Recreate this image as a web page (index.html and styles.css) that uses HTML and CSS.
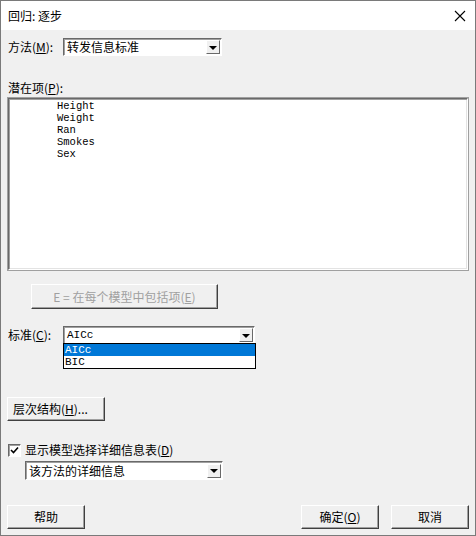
FILE: index.html
```html
<!DOCTYPE html>
<html lang="zh-CN">
<head>
    <meta charset="UTF-8">
    <title>回归: 逐步</title>
    <link rel="stylesheet" href="styles.css">
</head>
<body>
    <div class="window">
        <div class="titleBar">
            <span class="title">回归: 逐步</span>
            <svg class="closeIcon" width="12" height="12" viewBox="0 0 12 12">
                <path d="M1 1 L11 11 M11 1 L1 11" stroke="#000" stroke-width="1.1" fill="none"/>
            </svg>
        </div>

        <div class="content">
            <div class="row methodRow">
                <label class="rowLabel">方法(<u>M</u>):</label>
                <div class="combo methodCombo">
                    <span class="comboText">转发信息标准</span>
                    <span class="arrowBtn"><span class="arrow"></span></span>
                </div>
            </div>

            <div class="listLabel">潜在项(<u>P</u>):</div>
            <div class="listBox">
                <div class="listItem">Height</div>
                <div class="listItem">Weight</div>
                <div class="listItem">Ran</div>
                <div class="listItem">Smokes</div>
                <div class="listItem">Sex</div>
            </div>

            <div class="button includeBtn disabled">E = 在每个模型中包括项(<u>E</u>)</div>

            <div class="row criteriaRow">
                <label class="rowLabel">标准(<u>C</u>):</label>
                <div class="combo criteriaCombo">
                    <span class="comboText mono">AICc</span>
                    <span class="arrowBtn"><span class="arrow"></span></span>
                    <div class="dropList">
                        <div class="dropItem selected">AICc</div>
                        <div class="dropItem">BIC</div>
                    </div>
                </div>
            </div>

            <div class="button hierBtn">层次结构(<u>H</u>)...</div>

            <div class="checkRow">
                <span class="checkBox">
                    <svg width="11" height="11" viewBox="0 0 11 11">
                        <path d="M2 5 L4.5 7.5 L9 2.5" stroke="#000" stroke-width="1.6" fill="none"/>
                    </svg>
                </span>
                <span class="checkLabel">显示模型选择详细信息表(<u>D</u>)</span>
            </div>
            <div class="combo detailCombo">
                <span class="comboText">该方法的详细信息</span>
                <span class="arrowBtn"><span class="arrow"></span></span>
            </div>

            <div class="footerButtons">
                <div class="button footBtn">帮助</div>
                <div class="spacer"></div>
                <div class="button footBtn">确定(<u>O</u>)</div>
                <div class="button footBtn">取消</div>
            </div>
        </div>
    </div>
</body>
</html>
```

FILE: styles.css
```css
body {
    margin: 0;
    font-family: "Noto Sans CJK SC", "Liberation Sans", sans-serif;
    font-size: 12px;
    color: #000;
    background-color: #f0f0f0;
}

.window {
    width: 476px;
    height: 536px;
    box-sizing: border-box;
    border: 1px solid #7a7a7a;
    background-color: #f0f0f0;
    display: flex;
    flex-direction: column;
}

.titleBar {
    height: 29px;
    background-color: #fff;
    display: flex;
    align-items: center;
    justify-content: space-between;
    padding: 0 9px 0 7px;
}

.title {
    font-size: 12px;
    line-height: 14px;
}

.content {
    flex: 1;
    padding: 8px 6px 6px 6px;
    display: flex;
    flex-direction: column;
}

u {
    text-decoration: underline;
    text-underline-offset: 1px;
}

.row {
    display: flex;
    align-items: center;
    height: 18px;
}

.rowLabel {
    width: 55px;
    padding-left: 1px;
    line-height: 14px;
}

/* sunken combo box */
.combo {
    position: relative;
    height: 18px;
    box-sizing: border-box;
    border: 1px solid;
    border-color: #696969 #fff #fff #696969;
    box-shadow: inset 1px 1px 0 #a0a0a0;
    background-color: #fff;
    display: flex;
    align-items: center;
}

.comboText {
    flex: 1;
    padding-left: 3px;
    line-height: 14px;
    white-space: nowrap;
}

.mono {
    font-family: "Liberation Mono", monospace;
    font-size: 11px;
}

.arrowBtn {
    width: 14px;
    height: 14px;
    margin-right: 1px;
    box-sizing: border-box;
    border: 1px solid;
    border-color: #fff #696969 #696969 #fff;
    background-color: #f0f0f0;
    display: flex;
    align-items: center;
    justify-content: center;
}

.arrow {
    width: 0;
    height: 0;
    border-left: 4px solid transparent;
    border-right: 4px solid transparent;
    border-top: 4px solid #000;
    margin-top: 1px;
}

.methodCombo {
    width: 159px;
}

.listLabel {
    margin-top: 25px;
    padding-left: 1px;
    line-height: 14px;
    height: 14px;
}

.listBox {
    margin-top: 2px;
    width: 462px;
    height: 174px;
    box-sizing: border-box;
    border: 2px solid;
    border-color: #696969 #fff #fff #696969;
    box-shadow: inset 1px 1px 0 #a0a0a0, inset -1px -1px 0 #e3e3e3;
    outline: 1px solid #a0a0a0;
    outline-offset: -1px;
    background-color: #fff;
    padding: 1px 0 0 48px;
}

.listItem {
    font-family: "Liberation Mono", monospace;
    font-size: 10.5px;
    line-height: 12px;
    height: 12px;
}

/* raised 3D button */
.button {
    box-sizing: border-box;
    height: 24px;
    border: 1px solid;
    border-color: #fff #404040 #404040 #fff;
    box-shadow: inset -1px -1px 0 #a0a0a0;
    background-color: #f0f0f0;
    display: flex;
    align-items: center;
    justify-content: center;
    line-height: 14px;
}

.includeBtn {
    margin: 13px 0 0 24px;
    width: 187px;
    height: 25px;
}

.disabled {
    color: #a0a0a0;
}

.criteriaRow {
    margin-top: 17px;
}

.criteriaCombo {
    width: 192px;
}

.dropList {
    position: absolute;
    top: 16px;
    left: -1px;
    width: 193px;
    box-sizing: border-box;
    border: 1px solid #000;
    background-color: #fff;
    z-index: 2;
}

.dropItem {
    font-family: "Liberation Mono", monospace;
    font-size: 11px;
    line-height: 12px;
    height: 12px;
    padding-left: 1px;
}

.dropItem.selected {
    background-color: #0078d7;
    color: #fff;
}

.hierBtn {
    margin-top: 53px;
    width: 98px;
    justify-content: flex-start;
    padding-left: 5px;
}

.checkRow {
    margin-top: 22px;
    display: flex;
    align-items: center;
    height: 14px;
}

.checkBox {
    width: 13px;
    height: 13px;
    margin-left: 1px;
    box-sizing: border-box;
    border: 1px solid;
    border-color: #696969 #fff #fff #696969;
    box-shadow: inset 1px 1px 0 #a0a0a0;
    background-color: #fff;
    display: flex;
    align-items: center;
    justify-content: center;
}

.checkLabel {
    margin-left: 4px;
    line-height: 14px;
}

.detailCombo {
    margin: 4px 0 0 18px;
    width: 198px;
    height: 19px;
}

.footerButtons {
    margin-top: auto;
    display: flex;
    gap: 12px;
}

.footBtn {
    width: 78px;
}

.spacer {
    flex: 1;
}
```
